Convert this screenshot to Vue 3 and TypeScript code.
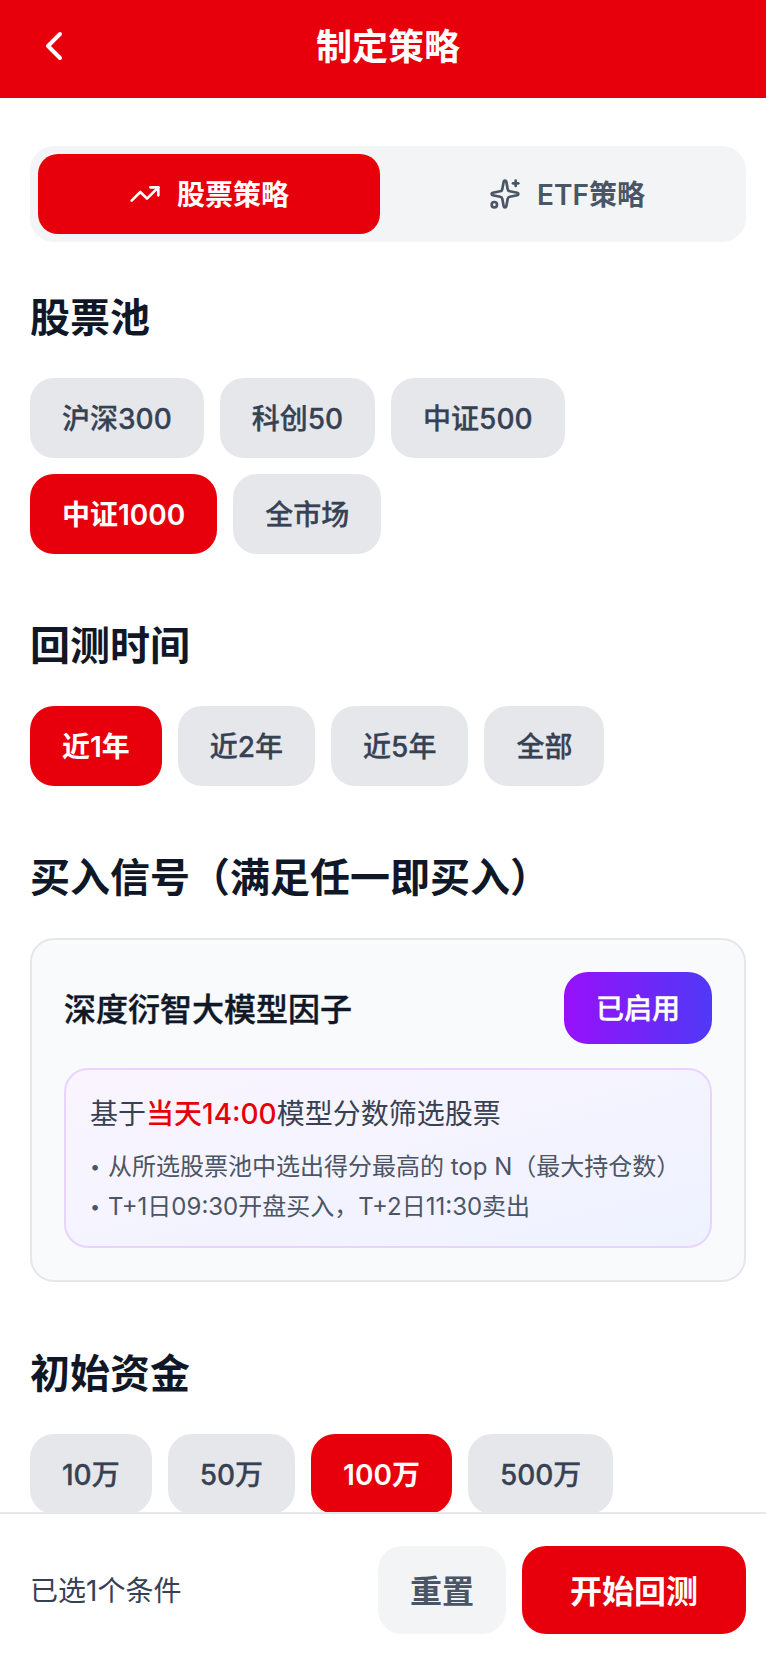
<script setup lang="ts">
interface Chip { label: string; active?: boolean }
const pools: Chip[] = [
  { label: '沪深300' }, { label: '科创50' }, { label: '中证500' },
  { label: '中证1000', active: true }, { label: '全市场' },
]
const periods: Chip[] = [
  { label: '近1年', active: true }, { label: '近2年' }, { label: '近5年' }, { label: '全部' },
]
const funds: Chip[] = [
  { label: '10万' }, { label: '50万' }, { label: '100万', active: true }, { label: '500万' },
]
</script>

<template>
  <div class="page">
    <header class="header">
      <svg class="back" viewBox="0 0 24 24" fill="none" stroke="currentColor" stroke-width="2" stroke-linecap="round" stroke-linejoin="round">
        <path d="m15 18-6-6 6-6" />
      </svg>
      <h1 class="title">制定策略</h1>
      <span class="spacer"></span>
    </header>

    <main class="content">
      <div class="tabs">
        <div class="tab tab-active">
          <svg class="tab-icon" viewBox="0 0 24 24" fill="none" stroke="currentColor" stroke-width="2" stroke-linecap="round" stroke-linejoin="round">
            <path d="M16 7h6v6" />
            <path d="m22 7-8.5 8.5-5-5L2 17" />
          </svg>
          <span class="tab-label">股票策略</span>
        </div>
        <div class="tab">
          <svg class="tab-icon" viewBox="0 0 24 24" fill="none" stroke="currentColor" stroke-width="2" stroke-linecap="round" stroke-linejoin="round">
            <path d="M11.017 2.814a1 1 0 0 1 1.966 0l1.051 5.558a2 2 0 0 0 1.594 1.594l5.558 1.051a1 1 0 0 1 0 1.966l-5.558 1.051a2 2 0 0 0-1.594 1.594l-1.051 5.558a1 1 0 0 1-1.966 0l-1.051-5.558a2 2 0 0 0-1.594-1.594l-5.558-1.051a1 1 0 0 1 0-1.966l5.558-1.051a2 2 0 0 0 1.594-1.594z" />
            <path d="M20 2v4" />
            <path d="M22 4h-4" />
            <circle cx="4" cy="20" r="2" />
          </svg>
          <span class="tab-label">ETF策略</span>
        </div>
      </div>

      <section class="section">
        <h2 class="heading">股票池</h2>
        <div class="chips">
          <span v-for="c in pools" :key="c.label" class="chip" :class="{ 'chip-active': c.active }">{{ c.label }}</span>
        </div>
      </section>

      <section class="section">
        <h2 class="heading">回测时间</h2>
        <div class="chips">
          <span v-for="c in periods" :key="c.label" class="chip" :class="{ 'chip-active': c.active }">{{ c.label }}</span>
        </div>
      </section>

      <section class="section">
        <h2 class="heading">买入信号（满足任一即买入）</h2>
        <div class="card">
          <div class="card-top">
            <span class="card-title">深度衍智大模型因子</span>
            <span class="badge">已启用</span>
          </div>
          <div class="info">
            <p class="info-main">基于<span class="hl">当天14:00</span>模型分数筛选股票</p>
            <p class="info-line first"><span class="dot">•</span>从所选股票池中选出得分最高的 top N（最大持仓数）</p>
            <p class="info-line"><span class="dot">•</span>T+1日09:30开盘买入，T+2日11:30卖出</p>
          </div>
        </div>
      </section>

      <section class="section">
        <h2 class="heading">初始资金</h2>
        <div class="chips">
          <span v-for="c in funds" :key="c.label" class="chip" :class="{ 'chip-active': c.active }">{{ c.label }}</span>
        </div>
      </section>
    </main>

    <footer class="footer">
      <span class="count">已选1个条件</span>
      <div class="actions">
        <span class="btn btn-reset">重置</span>
        <span class="btn btn-start">开始回测</span>
      </div>
    </footer>
  </div>
</template>

<style scoped>
.page {
  width: 766px;
  height: 1674px;
  display: flex;
  flex-direction: column;
  background: #fff;
  overflow: hidden;
  font-family: Inter, "Noto Sans CJK SC", sans-serif;
  color: #101828;
}
.header {
  flex: none;
  display: flex;
  align-items: center;
  height: 98px;
  padding: 22px 20px 28px 30px;
  box-sizing: border-box;
  background: #e7000b;
  color: #fff;
}
.back { flex: none; width: 48px; height: 48px; }
.title {
  flex: 1;
  margin: 0;
  padding-top: 2px;
  font-size: 36px;
  line-height: 48px;
  font-weight: 700;
  text-align: center;
}
.spacer { flex: none; width: 48px; }
.content {
  flex: 1;
  min-height: 0;
  overflow: hidden;
  padding: 48px 20px 0 30px;
}
.tabs {
  display: flex;
  gap: 16px;
  padding: 8px;
  border-radius: 24px;
  background: #f3f4f6;
}
.tab {
  flex: 1 1 0;
  height: 80px;
  display: flex;
  align-items: center;
  justify-content: center;
  gap: 16px;
  border-radius: 20px;
  font-size: 28px;
  font-weight: 600;
  color: #4a5565;
}
.tab-active { background: #e7000b; color: #fff; }
.tab-icon { flex: none; width: 32px; height: 32px; }
.tab-label { margin-top: -3px; }
.section { margin-top: 64px; }
.tabs + .section { margin-top: 48px; }
.heading {
  margin: 0 0 32px;
  font-size: 40px;
  line-height: 56px;
  font-weight: 700;
  color: #101828;
}
.chips { display: flex; flex-wrap: wrap; gap: 16px; }
.chip {
  height: 80px;
  box-sizing: border-box;
  display: flex;
  align-items: center;
  padding: 0 32px 2px;
  border-radius: 24px;
  background: #e5e7eb;
  color: #364153;
  font-size: 28px;
  font-weight: 500;
  -webkit-text-stroke: 0.3px currentColor;
}
.chip-active { background: #e7000b; color: #fff; font-weight: 600; -webkit-text-stroke: 0; }
.card {
  padding: 32px;
  border: 2px solid #e5e7eb;
  border-radius: 24px;
  background: #f9fafb;
}
.card-top {
  display: flex;
  align-items: center;
  justify-content: space-between;
  margin-bottom: 24px;
}
.card-title {
  margin-top: -3px;
  font-size: 32px;
  font-weight: 500;
  color: #101828;
  -webkit-text-stroke: 0.4px currentColor;
}
.badge {
  height: 72px;
  box-sizing: border-box;
  display: flex;
  align-items: center;
  padding: 0 32px 2px;
  border-radius: 24px;
  background: linear-gradient(to right, #9810fa, #4f39f6);
  color: #fff;
  font-size: 28px;
  font-weight: 500;
  -webkit-text-stroke: 0.4px currentColor;
}
.info {
  padding: 24px 24px 19px;
  border: 2px solid #e9d4ff;
  border-radius: 24px;
  background: linear-gradient(to bottom right, #faf5ff, #eef2ff);
}
.info p { margin: 0; }
.info-main { font-size: 28px; line-height: 40px; color: #364153; }
.hl { color: #e7000b; font-weight: 500; }
.info-line { font-size: 24px; line-height: 40px; color: #4a5565; }
.dot { display: inline-block; width: 18px; font-size: 18px; line-height: 1; vertical-align: 2px; }
.first { margin-top: 13px !important; }
.footer {
  flex: none;
  display: flex;
  align-items: center;
  justify-content: space-between;
  height: 162px;
  box-sizing: border-box;
  padding: 32px 20px 40px 30px;
  border-top: 2px solid #e5e7eb;
  background: #fff;
}
.count { margin-top: -3px; font-size: 28px; color: #364153; }
.actions { display: flex; gap: 16px; }
.btn {
  height: 88px;
  box-sizing: border-box;
  display: flex;
  align-items: center;
  border-radius: 24px;
  font-size: 32px;
  font-weight: 700;
}
.btn-reset { padding: 0 32px 2px; background: #f3f4f6; color: #4a5565; }
.btn-start { padding: 0 48px 2px; background: #e7000b; color: #fff; }
</style>

<style>
html, body { margin: 0; background: #fff; }
</style>
